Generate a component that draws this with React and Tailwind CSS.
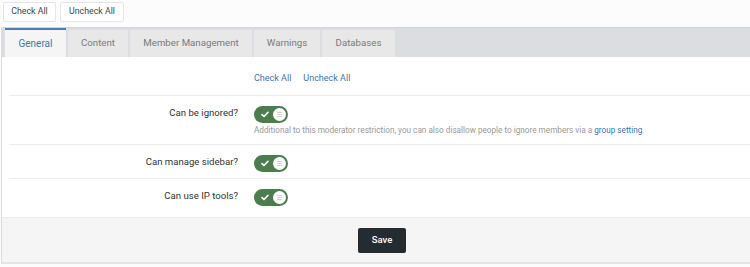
import React from 'react';

const Toggle = () => (
  <div className="relative w-[34px] h-[17px] rounded-full bg-[#4d7d4e] flex items-center">
    <svg className="ml-[7px]" width="8" height="7" viewBox="0 0 8 7">
      <path d="M1 3.6 L3 5.5 L7 1.3" stroke="#fff" strokeWidth="1.6" fill="none" strokeLinecap="round" strokeLinejoin="round" />
    </svg>
    <div className="absolute right-[2px] top-[2px] w-[13px] h-[13px] rounded-full bg-white flex flex-col items-center justify-center gap-[1px]">
      <span className="block w-[5px] h-[1px] bg-[#cfcfcf]" />
      <span className="block w-[5px] h-[1px] bg-[#cfcfcf]" />
      <span className="block w-[5px] h-[1px] bg-[#cfcfcf]" />
    </div>
  </div>
);

const Row = ({ label, hint, className }) => (
  <div className={`flex border-t border-[#ececec] ${className}`}>
    <div className="w-[229px] shrink-0 text-right text-[9.6px] text-[#333] pt-[10px]">{label}</div>
    <div className="pl-[16px] pt-[10px]">
      <Toggle />
      {hint && (
        <p className="text-[8.2px] leading-[12px] text-[#999] mt-[1px]">
          Additional to this moderator restriction, you can also disallow people to ignore members via a{' '}
          <a className="text-[#3b76ad]">group setting</a>.
        </p>
      )}
    </div>
  </div>
);

const tabs = [
  ['Content', 'w-[60px]'],
  ['Member Management', 'w-[122px]'],
  ['Warnings', 'w-[66px]'],
  ['Databases', 'w-[73px]'],
];

export default function App() {
  return (
    <div className="w-[750px] h-[267px] bg-[#fcfcfc] overflow-hidden" style={{ fontFamily: 'Roboto, "Liberation Sans", sans-serif' }}>
      <div className="flex gap-[4px] pl-[3px] pt-[2px] h-[27px]">
        <button className="h-[20px] w-[53px] bg-white border border-[#e6e6e6] rounded-[2px] text-[8.8px] text-[#444]">Check All</button>
        <button className="h-[20px] w-[64px] bg-white border border-[#e6e6e6] rounded-[2px] text-[8.8px] text-[#444]">Uncheck All</button>
      </div>
      <div className="ml-[1px] border-l border-[#dcdcdc] border-b-2 border-b-[#e4e4e4]">
        <div className="h-[30px] bg-[#dcdde0] flex items-end pl-[3px] gap-[2px] border-t border-[#d3d4d7]">
          <div className="h-[29px] w-[61px] bg-[#f5f5f5] border-t-2 border-[#4a7fb5] text-[#4675a6] text-[10px] flex items-center justify-center">General</div>
          {tabs.map(([t, w]) => (
            <div key={t} className={`h-[27px] ${w} bg-[#e8e8e9] text-[#7a7a7a] text-[9.7px] flex items-center justify-center`}>{t}</div>
          ))}
        </div>
        <div className="bg-white">
          <div className="h-[38px] flex items-start pt-[15px] pl-[252px] gap-[12px] text-[9px] leading-[12px] text-[#3b76ad]">
            <span>Check All</span>
            <span>Uncheck All</span>
          </div>
          <div className="ml-[7px]">
            <Row label="Can be ignored?" hint className="h-[49px]" />
            <Row label="Can manage sidebar?" className="h-[34px]" />
            <Row label="Can use IP tools?" className="h-[39px]" />
          </div>
        </div>
        <div className="h-[45px] bg-[#f5f5f5] border-t border-[#ececec] flex items-center justify-center pl-[12px]">
          <button className="w-[48px] h-[25px] bg-[#252c31] rounded-[2px] text-white text-[9.5px] font-medium">Save</button>
        </div>
      </div>
    </div>
  );
}
